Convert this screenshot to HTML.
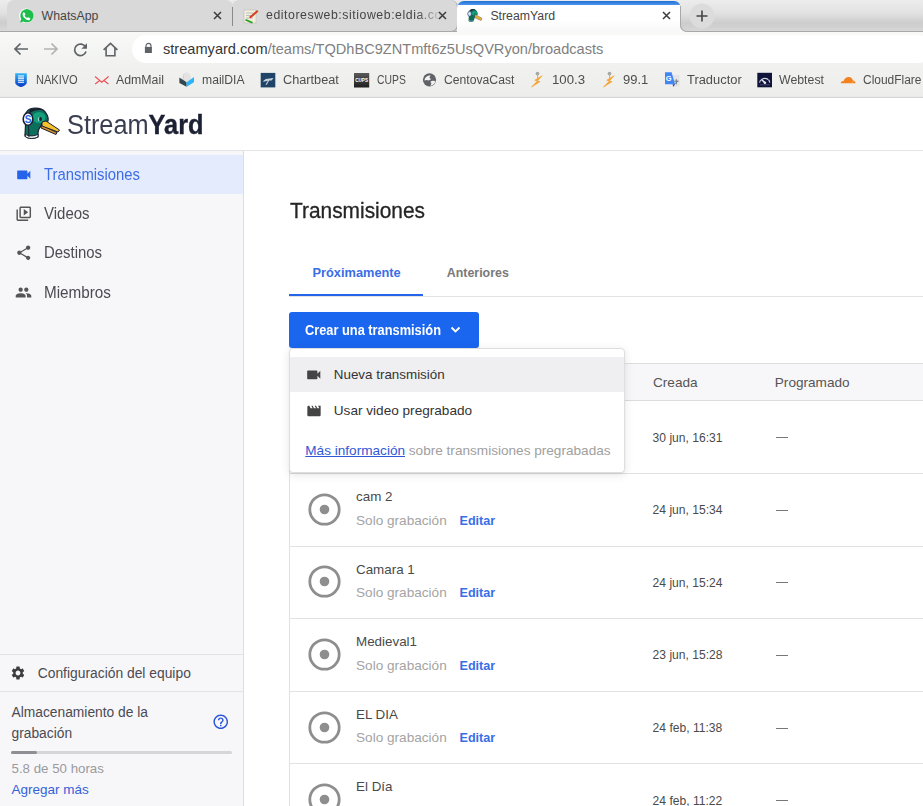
<!DOCTYPE html>
<html><head><meta charset="utf-8">
<style>
*{box-sizing:border-box;margin:0;padding:0}
html,body{width:923px;height:806px;overflow:hidden;background:#fff;font-family:"Liberation Sans",sans-serif}
.a{position:absolute;white-space:nowrap;line-height:1}
svg.a{overflow:visible}
</style></head><body>
<div class="a" style="left:0px;top:0px;width:923px;height:32px;background:#f7f7f7"></div>
<div class="a" style="left:0px;top:0px;width:923px;height:31px;background:linear-gradient(#ececec,#e2e2e2 40%,#cdcdcd 72%,#cfcfcf 80%,#d9d9d9)"></div>
<div class="a" style="left:0px;top:31px;width:923px;height:1px;background:#a8a8a8"></div>
<div class="a" style="left:7px;top:0px;width:226px;height:31px;background:#d9d9d9;border-radius:7px 7px 0 0"></div>
<div class="a" style="left:232px;top:0;width:226px;height:32px;background:#d9d9d9;border-radius:7px 7px 7px 0;border-right:1px solid #a8a8a8;border-bottom:1px solid #a8a8a8"></div>
<div class="a" style="left:232px;top:7px;width:1px;height:19px;background:#8a8a8a"></div>
<div class="a" style="left:457px;top:1px;width:224px;height:31px;background:linear-gradient(#fff,#fff 60%,#f8f8f8);border-radius:7px 7px 0 0;overflow:hidden"><div style="height:3.5px;background:linear-gradient(#1f6fd8,#4f95ea)"></div></div>
<div class="a" style="left:680px;top:0px;width:243px;height:32px;background:#f9f9f9"></div>
<div class="a" style="left:680px;top:0;width:243px;height:32px;background:linear-gradient(#ececec,#e2e2e2 40%,#cdcdcd 72%,#cfcfcf 80%,#d9d9d9);border-bottom-left-radius:7px"></div>
<div class="a" style="left:680px;top:6px;width:12px;height:26px;border-left:1px solid #a8a8a8;border-bottom:1px solid #a8a8a8;border-bottom-left-radius:7px"></div>
<div class="a" style="left:692px;top:31px;width:231px;height:1px;background:#a8a8a8"></div>
<svg class="a" style="left:689px;top:3px;" width="26" height="26" viewBox="0 0 26 26"><circle cx="13" cy="13" r="12.5" fill="#dcdcdc"/><path d="M13 7.5v11M7.5 13h11" stroke="#444" stroke-width="1.6"/></svg>
<svg class="a" style="left:18px;top:8px;" width="16" height="16" viewBox="0 0 16 16"><circle cx="8.3" cy="7.8" r="7.2" fill="#fff"/><path d="M2.2 14.6l1-3.6A6.6 6.6 0 1 1 5.6 13.4z" fill="#1ebe4d"/><path d="M5.3 4.6c.4-.5 1-.4 1.3.2l.7 1.3c.2.4 0 .7-.3 1l-.4.4c.5 1.1 1.4 2 2.5 2.5l.4-.4c.3-.3.7-.4 1-.2l1.3.7c.5.3.6.9.2 1.3-.8 1-2 1.2-3.4.4-1.6-.9-2.8-2.1-3.6-3.7-.6-1.3-.5-2.6.3-3.5z" fill="#fff"/></svg>
<svg class="a" style="left:243px;top:8px;" width="16" height="16" viewBox="0 0 16 16"><rect x="1" y="2" width="12" height="13" fill="#f4f0dc" stroke="#bbb" stroke-width=".6"/><path d="M3 5h8M3 7.5h8M3 10h7" stroke="#9ab" stroke-width=".7"/><path d="M6 9l8-7 1.5 1.5-8 7z" fill="#d9401e"/><path d="M3 11l7 3-1 1.5-7-3z" fill="#2aa02a"/></svg>
<svg class="a" style="left:466px;top:8px;" width="18" height="16" viewBox="0 0 18 16"><path d="M2.5 13L2.8 8.5C1.5 6.5 2 2.5 5 1.5C7.5 .7 10.5 1.3 11.3 4C11.8 5 11.8 6 11.5 7L9.5 8L9 9.5C8.3 10.5 8 11.5 8 13C6 14.2 3.8 14.2 2.5 13Z" fill="#0f6b5a"/><ellipse cx="8.5" cy="5.3" rx="2.6" ry="2.2" fill="#16a07d"/><path d="M4 2C5.5 .8 8.5 .8 10 2.2C8 1.8 6 2.2 4.8 3.3Z" fill="#1b2a40"/><ellipse cx="3.6" cy="5.8" rx="1.9" ry="2.5" fill="#cfe3fb" stroke="#2a3a55" stroke-width=".6"/><circle cx="9" cy="6" r=".6" fill="#1b1f30"/><path d="M9.2 6.4L16 10.3L15 12.5L8.8 9.8Z" fill="#e9b030" stroke="#4a4a6a" stroke-width=".4"/><path d="M3 12.5C4.5 13.5 6.5 13.5 8 12.5" stroke="#9fb3c0" stroke-width=".8" fill="none"/></svg>
<div class="a" style="left:41.6px;top:9.50px;font-size:12.3px;color:#454545">WhatsApp</div>
<div class="a" style="left:266px;top:9.1px;width:180px;overflow:hidden;font-size:12.3px;line-height:1;letter-spacing:0.55px;color:#454545;-webkit-mask-image:linear-gradient(90deg,#000 84%,transparent 98%)">editoresweb:sitioweb:eldia.com</div>
<div class="a" style="left:490.4px;top:9.50px;font-size:12.3px;color:#454545">StreamYard</div>
<svg class="a" style="left:213.0px;top:11px;" width="9" height="9" viewBox="0 0 9 9"><path d="M1 1l7 7M8 1l-7 7" stroke="#3c3c3c" stroke-width="1.5"/></svg>
<svg class="a" style="left:438.0px;top:11px;" width="9" height="9" viewBox="0 0 9 9"><path d="M1 1l7 7M8 1l-7 7" stroke="#3c3c3c" stroke-width="1.5"/></svg>
<svg class="a" style="left:662.0px;top:11px;" width="9" height="9" viewBox="0 0 9 9"><path d="M1 1l7 7M8 1l-7 7" stroke="#3c3c3c" stroke-width="1.5"/></svg>
<div class="a" style="left:0px;top:32px;width:923px;height:65px;background:linear-gradient(#f9f9f8,#f1f1f0 50%,#ededeb)"></div>
<div class="a" style="left:132px;top:35px;width:800px;height:28px;background:#fff;border-radius:14px"></div>
<svg class="a" style="left:13px;top:42px;" width="16" height="14" viewBox="0 0 16 14"><path d="M15 7H2M7.5 1.5L2 7l5.5 5.5" stroke="#5f6368" stroke-width="1.7" fill="none"/></svg>
<svg class="a" style="left:43px;top:42px;" width="16" height="14" viewBox="0 0 16 14"><path d="M1 7h13M8.5 1.5L14 7l-5.5 5.5" stroke="#b3b3b3" stroke-width="1.7" fill="none"/></svg>
<svg class="a" style="left:73px;top:41.5px;" width="15" height="15" viewBox="0 0 15 15"><path d="M12.6 5.2A5.8 5.8 0 1 0 13 9.5" stroke="#5f6368" stroke-width="1.7" fill="none"/><path d="M14 1.2v5.6H8.4z" fill="#5f6368"/></svg>
<svg class="a" style="left:102px;top:41px;" width="17" height="16" viewBox="0 0 17 16"><path d="M1.6 8.9L8.5 2.3l6.9 6.6M4.1 7.1v7.6h8.8V7.1" stroke="#5f6368" stroke-width="1.6" fill="none"/></svg>
<svg class="a" style="left:144px;top:42px;" width="9" height="12" viewBox="0 0 9 12"><path d="M2 5.5V3.9A2.5 2.5 0 0 1 7 3.9V5.5" stroke="#5f6368" stroke-width="1.1" fill="none"/><rect x=".9" y="4.9" width="7" height="6.1" fill="#5f6368"/></svg>
<div class="a" style="left:163.0px;top:41.50px;font-size:14.6px;color:#808080"><span style="color:#363636">streamyard.com</span>/teams/TQDhBC9ZNTmft6z5UsQVRyon/broadcasts</div>
<div class="a" style="left:0px;top:96px;width:923px;height:1px;background:#e9e9e8"></div>
<div class="a" style="left:0px;top:97px;width:923px;height:1px;background:#d6d6d6"></div>
<div class="a" style="left:36.2px;top:74.00px;font-size:12.5px;transform-origin:0 0;transform:scaleX(0.883);color:#4e4e4e">NAKIVO</div>
<div class="a" style="left:116.3px;top:74.00px;font-size:12.5px;transform-origin:0 0;transform:scaleX(0.985);color:#4e4e4e">AdmMail</div>
<div class="a" style="left:202.3px;top:74.00px;font-size:12.5px;transform-origin:0 0;transform:scaleX(0.973);color:#4e4e4e">mailDIA</div>
<div class="a" style="left:282.5px;top:74.00px;font-size:12.5px;transform-origin:0 0;transform:scaleX(1.018);color:#4e4e4e">Chartbeat</div>
<div class="a" style="left:376.8px;top:74.00px;font-size:12.5px;transform-origin:0 0;transform:scaleX(0.829);color:#4e4e4e">CUPS</div>
<div class="a" style="left:443.8px;top:74.00px;font-size:12.5px;transform-origin:0 0;transform:scaleX(0.974);color:#4e4e4e">CentovaCast</div>
<div class="a" style="left:552.2px;top:74.00px;font-size:12.5px;transform-origin:0 0;transform:scaleX(1.058);color:#4e4e4e">100.3</div>
<div class="a" style="left:623.4px;top:74.00px;font-size:12.5px;transform-origin:0 0;transform:scaleX(1.039);color:#4e4e4e">99.1</div>
<div class="a" style="left:686.7px;top:74.00px;font-size:12.5px;transform-origin:0 0;transform:scaleX(1.031);color:#4e4e4e">Traductor</div>
<div class="a" style="left:779.2px;top:74.00px;font-size:12.5px;transform-origin:0 0;transform:scaleX(0.986);color:#4e4e4e">Webtest</div>
<div class="a" style="left:862.9px;top:74.00px;font-size:12.5px;transform-origin:0 0;transform:scaleX(0.957);color:#4e4e4e">CloudFlare</div>
<svg class="a" style="left:12.5px;top:71.5px;" width="16" height="16" viewBox="0 0 16 16"><defs><linearGradient id="nk" x1="0" y1="0" x2="0" y2="1"><stop offset="0" stop-color="#35b6f4"/><stop offset="1" stop-color="#0638c4"/></linearGradient></defs><path d="M2.2 1.3h11.6v9.2C13.8 12.5 11 14.2 8 15C5 14.2 2.2 12.5 2.2 10.5z" fill="url(#nk)"/><path d="M5 4h6M5 6.1h6M5 8.2h6M5 10.3h6" stroke="#fff" stroke-width="1.05"/></svg>
<svg class="a" style="left:93.5px;top:71.5px;" width="16" height="16" viewBox="0 0 16 16"><path d="M1 4.5L7.8 10.2L14.6 4.5M1.2 12L6 8.2M14.4 12L9.6 8.2" stroke="#ee4d55" stroke-width="1.1" fill="none"/></svg>
<svg class="a" style="left:179px;top:71px;" width="16" height="16" viewBox="0 0 16 16"><ellipse cx="7.6" cy="6.6" rx="4.4" ry="5.4" fill="#e3e3e3"/><path d="M5 3C4 5 4 9 6 11" stroke="#d0d0d0" stroke-width=".8" fill="none"/><path d="M.4 6.4L7.6 11.2V15.8L.4 11.9z" fill="#36464f"/><path d="M7.6 11.2L15 6V11.2L7.6 15.8z" fill="#2bb6fb"/></svg>
<svg class="a" style="left:259.5px;top:71.5px;" width="16" height="16" viewBox="0 0 16 16"><rect x=".7" y=".9" width="14.6" height="14.5" fill="#1f4468"/><path d="M2.6 9.6L5.8 6.9L13.6 6.1L11.6 8.4L9.2 8.6L6.6 13L5.6 12.6L7.9 8.7L4.6 9.6Z" fill="#c9d3de"/></svg>
<svg class="a" style="left:354px;top:71.5px;" width="16" height="16" viewBox="0 0 16 16"><defs><linearGradient id="cu" x1="0" y1="0" x2="0" y2="1"><stop offset="0" stop-color="#5a5a5a"/><stop offset="1" stop-color="#1e1e1e"/></linearGradient></defs><rect x="0" y="1" width="15.2" height="14.5" fill="url(#cu)"/><text x="7.6" y="10" font-size="4.6" fill="#fff" text-anchor="middle" font-family="Liberation Sans" font-weight="bold">CUPS</text></svg>
<svg class="a" style="left:421.5px;top:71.5px;" width="16" height="16" viewBox="0 0 16 16"><circle cx="7.5" cy="7.8" r="6.6" fill="#5f6368"/><path d="M2.6 8.6C2.4 6 4.5 3.3 8.6 3.4L7.4 5.6L9 7.3L6.6 8.6L4.8 8Z" fill="#f2f2f2"/><path d="M8.4 9.4L10.6 8.7L13.4 9C13 11.5 11 13.6 8.4 13.9L9.4 11.6Z" fill="#f2f2f2"/></svg>
<svg class="a" style="left:529px;top:71px;" width="16" height="16" viewBox="0 0 16 16"><circle cx="8.5" cy="2.6" r="1.9" fill="#a8a8a8"/><path d="M8.5 3.5L8.8 8" stroke="#f6a637" stroke-width="1.1"/><path d="M13.2 4.8L5.8 9.2L8.6 9.8L2.6 16L11 10.6L8.2 9.9z" fill="#f7a02a" stroke="#f7a02a" stroke-width=".7" stroke-linejoin="round"/></svg>
<svg class="a" style="left:600.5px;top:71px;" width="16" height="16" viewBox="0 0 16 16"><circle cx="8.5" cy="2.6" r="1.9" fill="#a8a8a8"/><path d="M8.5 3.5L8.8 8" stroke="#f6a637" stroke-width="1.1"/><path d="M13.2 4.8L5.8 9.2L8.6 9.8L2.6 16L11 10.6L8.2 9.9z" fill="#f7a02a" stroke="#f7a02a" stroke-width=".7" stroke-linejoin="round"/></svg>
<svg class="a" style="left:664px;top:71px;" width="16" height="16" viewBox="0 0 16 16"><rect x="8.5" y="4" width="7" height="11.6" fill="#e4e4e4"/><path d="M12.3 8.2v5.2M10.2 10.2h4.4M10.6 13l3.4-3" stroke="#6d7f86" stroke-width="1"/><path d="M1 1.2H7.6L11 13.2H1Z" fill="#4285f4"/><path d="M8.6 13.2H11L9.4 16Z" fill="#3440b8"/><text x="4.7" y="10.3" font-size="7.5" fill="#fff" text-anchor="middle" font-family="Liberation Sans" font-weight="bold">G</text></svg>
<svg class="a" style="left:756.5px;top:71.5px;" width="16" height="16" viewBox="0 0 16 16"><rect x=".3" y=".8" width="14.7" height="14.5" fill="#10143a"/><path d="M2.6 10.6A5.2 5.2 0 0 1 12.8 10.6" stroke="#cfd6e6" stroke-width="1.1" fill="none"/><path d="M3.2 7.4l1 .6M5 4.9l.6 1M7.7 4.2v1.1M10.4 4.9l-.6 1M12.2 7.4l-1 .6" stroke="#10143a" stroke-width=".7"/><path d="M7.7 10.5L4.6 7.6" stroke="#e8ecf2" stroke-width="1.5"/><circle cx="7.9" cy="10.7" r="1.3" fill="#e8ecf2"/><path d="M3 12.8h9.5" stroke="#6a7090" stroke-width=".6"/></svg>
<svg class="a" style="left:839.5px;top:71.5px;" width="16" height="16" viewBox="0 0 16 16"><path d="M.8 11.2C1 9.6 2.2 8.7 3.7 9C4.4 6.5 6.5 5 8.6 5C11 5 12.6 6.6 13 8.6C14.4 8.6 15.5 9.8 15.5 11.2z" fill="#f48120"/><path d="M11.5 11.2C12 9.8 13 9.2 14.2 9.4" stroke="#fbad41" stroke-width="1" fill="none"/></svg>
<div class="a" style="left:0px;top:98px;width:923px;height:52px;background:#fff"></div>
<div class="a" style="left:0px;top:150px;width:923px;height:1px;background:#e4e4e7"></div>
<div class="a" style="left:0px;top:151px;width:243px;height:655px;background:#f7f7f9"></div>
<div class="a" style="left:243px;top:151px;width:1px;height:655px;background:#dddde1"></div>
<div class="a" style="left:0px;top:155px;width:243px;height:39px;background:#e3ebfd"></div>
<svg class="a" style="left:18px;top:104px;" width="46" height="40" viewBox="0 0 46 40"><path d="M7 31L7.5 21C5 17 6 8 12 5C17 3 25 4 28 9C30 12 30.5 15 30 17L24 19L23 22C21 24 20 26 20 30L20 33C16 35 10 35 7 32Z" fill="#0e6e5c" stroke="#1b1f30" stroke-width="1.2"/><ellipse cx="21" cy="13.5" rx="6.5" ry="5.5" fill="#14a07c"/><path d="M11 6.5C14 3.5 22 3.5 25.5 6.5C21 5.5 15 6.5 12 9Z" fill="#1b1f30"/><path d="M7.3 30C10 32.5 17 32.5 20 30L20 33C16 35 10 35 7.3 32.5Z" fill="#f2f6f5" stroke="#1b1f30" stroke-width="1"/><path d="M10.5 21L11 33" stroke="#1b1f30" stroke-width="1"/><ellipse cx="10" cy="15" rx="4.8" ry="6.2" fill="#fff" stroke="#1b1f30" stroke-width="1.6"/><text x="10" y="19" font-size="10" font-weight="bold" fill="#2f6ae8" text-anchor="middle" font-family="Liberation Sans">S</text><ellipse cx="22.6" cy="15" rx="1.3" ry="1.9" fill="#1b1f30"/><path d="M20.8 13.5C20.3 14.5 20.3 16 20.8 17" stroke="#e8f0ee" stroke-width=".8" fill="none"/><path d="M23.5 21L39 28.5L38 30.5L23 24Z" fill="#d8902c" stroke="#1b1f30" stroke-width="1"/><path d="M24 18L28 17L41.5 26L40 28L24 22Z" fill="#f6c22e" stroke="#1b1f30" stroke-width="1"/></svg>
<div class="a" style="left:67.0px;top:109.80px;font-size:28.2px;transform-origin:0 0;transform:scaleX(0.898);color:#1c2033"><span style="color:#3a3e50">Stream</span><span style="font-weight:bold;-webkit-text-stroke:0.4px #1c2033">Yard</span></div>
<svg class="a" style="left:14.8px;top:165.5px;" width="17.5" height="17.5" viewBox="0 0 24 24"><path fill="#2563eb" d="M17 10.5V7c0-.55-.45-1-1-1H4c-.55 0-1 .45-1 1v10c0 .55.45 1 1 1h12c.55 0 1-.45 1-1v-3.5l4 4v-11l-4 4z"/></svg>
<svg class="a" style="left:14.6px;top:205.3px;" width="17.5" height="17.5" viewBox="0 0 24 24"><path fill="#555" d="M4 6H2v14c0 1.1.9 2 2 2h14v-2H4V6zm16-4H8c-1.1 0-2 .9-2 2v12c0 1.1.9 2 2 2h12c1.1 0 2-.9 2-2V4c0-1.1-.9-2-2-2zm0 14H8V4h12v12zM12 5.5v9l6-4.5z"/></svg>
<svg class="a" style="left:14.6px;top:244.4px;" width="17.5" height="17.5" viewBox="0 0 24 24"><path fill="#555" d="M18 16.08c-.76 0-1.44.3-1.96.77L8.91 12.7c.05-.23.09-.46.09-.7s-.04-.47-.09-.7l7.05-4.11c.54.5 1.25.81 2.04.81 1.66 0 3-1.34 3-3s-1.34-3-3-3-3 1.34-3 3c0 .24.04.47.09.7L8.04 9.81C7.5 9.31 6.79 9 6 9c-1.66 0-3 1.34-3 3s1.34 3 3 3c.79 0 1.5-.31 2.04-.81l7.12 4.16c-.05.21-.08.43-.08.65 0 1.61 1.31 2.92 2.92 2.92 1.61 0 2.92-1.31 2.92-2.92s-1.31-2.92-2.92-2.92z"/></svg>
<svg class="a" style="left:15.2px;top:283.8px;" width="17" height="17" viewBox="0 0 24 24"><path fill="#555" d="M16 11c1.66 0 2.99-1.34 2.99-3S17.66 5 16 5c-1.66 0-3 1.34-3 3s1.34 3 3 3zm-8 0c1.66 0 2.99-1.34 2.99-3S9.66 5 8 5C6.34 5 5 6.34 5 8s1.34 3 3 3zm0 2c-2.33 0-7 1.17-7 3.5V19h14v-2.5c0-2.33-4.67-3.5-7-3.5zm8 0c-.29 0-.62.02-.97.05 1.16.84 1.97 1.97 1.97 3.45V19h6v-2.5c0-2.33-4.67-3.5-7-3.5z"/></svg>
<div class="a" style="left:43.5px;top:167.30px;font-size:16.86px;transform-origin:0 0;transform:scaleX(0.881);color:#3d6de6">Transmisiones</div>
<div class="a" style="left:43.5px;top:206.40px;font-size:16.86px;transform-origin:0 0;transform:scaleX(0.890);color:#4b4b52">Videos</div>
<div class="a" style="left:43.5px;top:245.10px;font-size:16.86px;transform-origin:0 0;transform:scaleX(0.884);color:#4b4b52">Destinos</div>
<div class="a" style="left:43.5px;top:284.70px;font-size:16.86px;transform-origin:0 0;transform:scaleX(0.905);color:#4b4b52">Miembros</div>
<div class="a" style="left:0px;top:654px;width:243px;height:1px;background:#e3e3e6"></div>
<div class="a" style="left:0px;top:691px;width:243px;height:1px;background:#e3e3e6"></div>
<svg class="a" style="left:9.6px;top:665px;" width="16" height="16" viewBox="0 0 24 24"><path fill="#3d3d3d" d="M19.14 12.94c.04-.3.06-.61.06-.94 0-.32-.02-.64-.07-.94l2.03-1.58c.18-.14.23-.41.12-.61l-1.92-3.32c-.12-.22-.37-.29-.59-.22l-2.39.96c-.5-.38-1.03-.7-1.62-.94l-.36-2.54c-.04-.24-.24-.41-.48-.41h-3.84c-.24 0-.43.17-.47.41l-.36 2.54c-.59.24-1.13.57-1.62.94l-2.39-.96c-.22-.08-.47 0-.59.22L2.74 8.87c-.12.21-.08.47.12.61l2.03 1.58c-.05.3-.09.63-.09.94s.02.64.07.94l-2.03 1.58c-.18.14-.23.41-.12.61l1.92 3.32c.12.22.37.29.59.22l2.39-.96c.5.38 1.03.7 1.62.94l.36 2.54c.05.24.24.41.48.41h3.84c.24 0 .44-.17.47-.41l.36-2.54c.59-.24 1.13-.56 1.62-.94l2.39.96c.22.08.47 0 .59-.22l1.92-3.32c.12-.22.07-.47-.12-.61l-2.01-1.58zM12 15.6c-1.98 0-3.6-1.62-3.6-3.6s1.62-3.6 3.6-3.6 3.6 1.62 3.6 3.6-1.62 3.6-3.6 3.6z"/></svg>
<div class="a" style="left:37.7px;top:666.50px;font-size:13.85px;color:#4b4b52">Configuración del equipo</div>
<div class="a" style="left:11.5px;top:705.50px;font-size:13.8px;color:#4b4b52">Almacenamiento de la</div>
<div class="a" style="left:11.5px;top:726.50px;font-size:13.8px;color:#4b4b52">grabación</div>
<svg class="a" style="left:211.8px;top:713.2px;" width="17.5" height="17.5" viewBox="0 0 24 24"><path fill="#2a55d9" d="M11 18h2v-2h-2v2zm1-16C6.48 2 2 6.48 2 12s4.48 10 10 10 10-4.48 10-10S17.52 2 12 2zm0 18c-4.41 0-8-3.59-8-8s3.59-8 8-8 8 3.59 8 8-3.59 8-8 8zm0-14c-2.21 0-4 1.79-4 4h2c0-1.1.9-2 2-2s2 .9 2 2c0 2-3 1.75-3 5h2c0-2.25 3-2.5 3-5 0-2.21-1.79-4-4-4z"/></svg>
<div class="a" style="left:11px;top:751px;width:221px;height:3px;background:#d6d6d9;border-radius:2px"></div>
<div class="a" style="left:11px;top:751px;width:26px;height:3px;background:#8f8f93;border-radius:2px"></div>
<div class="a" style="left:11.5px;top:761.60px;font-size:13.3px;color:#9a9a9e">5.8 de 50 horas</div>
<div class="a" style="left:11.5px;top:783.00px;font-size:13.5px;color:#3461d8">Agregar más</div>
<div class="a" style="left:290.4px;top:200.70px;font-size:21.37px;transform-origin:0 0;transform:scaleX(0.978);color:#252525;-webkit-text-stroke:0.3px #252525">Transmisiones</div>
<div class="a" style="left:312.5px;top:267.00px;font-size:12.8px;color:#3a6de6;font-weight:bold">Próximamente</div>
<div class="a" style="left:446.8px;top:267.00px;font-size:12.4px;color:#797979;font-weight:bold">Anteriores</div>
<div class="a" style="left:289px;top:296px;width:634px;height:1px;background:#e3e3e3"></div>
<div class="a" style="left:289px;top:294px;width:134px;height:2px;background:#2563eb"></div>
<div class="a" style="left:289px;top:312px;width:190px;height:36px;background:#1a66ee;border-radius:3px"></div>
<div class="a" style="left:304.8px;top:323.30px;font-size:14.39px;transform-origin:0 0;transform:scaleX(0.891);color:#fff;font-weight:bold">Crear una transmisión</div>
<svg class="a" style="left:450px;top:326px;" width="11" height="8" viewBox="0 0 11 8"><path d="M1.5 1.5l4 4 4-4" stroke="#fff" stroke-width="1.8" fill="none"/></svg>
<div class="a" style="left:289px;top:363px;width:634px;height:1px;background:#dedede"></div>
<div class="a" style="left:289px;top:364px;width:634px;height:36px;background:#f7f7f9"></div>
<div class="a" style="left:289px;top:400px;width:634px;height:1px;background:#dcdcdc"></div>
<div class="a" style="left:289px;top:363px;width:1px;height:443px;background:#e0e0e0"></div>
<div class="a" style="left:653.0px;top:375.70px;font-size:13.6px;color:#555">Creada</div>
<div class="a" style="left:774.8px;top:375.80px;font-size:13.6px;color:#555">Programado</div>
<svg class="a" style="left:308.3px;top:420.1px;" width="33" height="33" viewBox="0 0 33 33"><circle cx="16.5" cy="16.5" r="14.7" stroke="#8e8e8e" stroke-width="2.8" fill="none"/><circle cx="16.5" cy="16.5" r="4.8" fill="#8e8e8e"/></svg>
<div class="a" style="left:652.6px;top:431.50px;font-size:12.1px;color:#4a4a4a">30 jun, 16:31</div>
<div class="a" style="left:775.5px;top:437px;width:12px;height:1px;background:#777"></div>
<div class="a" style="left:289px;top:473px;width:634px;height:1px;background:#e2e2e2"></div>
<svg class="a" style="left:308.3px;top:492.7px;" width="33" height="33" viewBox="0 0 33 33"><circle cx="16.5" cy="16.5" r="14.7" stroke="#8e8e8e" stroke-width="2.8" fill="none"/><circle cx="16.5" cy="16.5" r="4.8" fill="#8e8e8e"/></svg>
<div class="a" style="left:356.0px;top:489.90px;font-size:13.4px;color:#4a4a4a">cam 2</div>
<div class="a" style="left:356.0px;top:513.60px;font-size:13.6px;color:#a4a4a4">Solo grabación</div>
<div class="a" style="left:459.5px;top:514.60px;font-size:12.6px;color:#386ee6;font-weight:bold">Editar</div>
<div class="a" style="left:652.6px;top:504.10px;font-size:12.1px;color:#4a4a4a">24 jun, 15:34</div>
<div class="a" style="left:775.5px;top:510px;width:12px;height:1px;background:#777"></div>
<div class="a" style="left:289px;top:546px;width:634px;height:1px;background:#e2e2e2"></div>
<svg class="a" style="left:308.3px;top:565.3px;" width="33" height="33" viewBox="0 0 33 33"><circle cx="16.5" cy="16.5" r="14.7" stroke="#8e8e8e" stroke-width="2.8" fill="none"/><circle cx="16.5" cy="16.5" r="4.8" fill="#8e8e8e"/></svg>
<div class="a" style="left:356.0px;top:562.50px;font-size:13.4px;color:#4a4a4a">Camara 1</div>
<div class="a" style="left:356.0px;top:586.20px;font-size:13.6px;color:#a4a4a4">Solo grabación</div>
<div class="a" style="left:459.5px;top:587.20px;font-size:12.6px;color:#386ee6;font-weight:bold">Editar</div>
<div class="a" style="left:652.6px;top:576.70px;font-size:12.1px;color:#4a4a4a">24 jun, 15:24</div>
<div class="a" style="left:775.5px;top:582px;width:12px;height:1px;background:#777"></div>
<div class="a" style="left:289px;top:618px;width:634px;height:1px;background:#e2e2e2"></div>
<svg class="a" style="left:308.3px;top:637.9px;" width="33" height="33" viewBox="0 0 33 33"><circle cx="16.5" cy="16.5" r="14.7" stroke="#8e8e8e" stroke-width="2.8" fill="none"/><circle cx="16.5" cy="16.5" r="4.8" fill="#8e8e8e"/></svg>
<div class="a" style="left:356.0px;top:635.10px;font-size:13.4px;color:#4a4a4a">Medieval1</div>
<div class="a" style="left:356.0px;top:658.80px;font-size:13.6px;color:#a4a4a4">Solo grabación</div>
<div class="a" style="left:459.5px;top:659.80px;font-size:12.6px;color:#386ee6;font-weight:bold">Editar</div>
<div class="a" style="left:652.6px;top:649.30px;font-size:12.1px;color:#4a4a4a">23 jun, 15:28</div>
<div class="a" style="left:775.5px;top:655px;width:12px;height:1px;background:#777"></div>
<div class="a" style="left:289px;top:691px;width:634px;height:1px;background:#e2e2e2"></div>
<svg class="a" style="left:308.3px;top:710.5px;" width="33" height="33" viewBox="0 0 33 33"><circle cx="16.5" cy="16.5" r="14.7" stroke="#8e8e8e" stroke-width="2.8" fill="none"/><circle cx="16.5" cy="16.5" r="4.8" fill="#8e8e8e"/></svg>
<div class="a" style="left:356.0px;top:707.70px;font-size:13.4px;color:#4a4a4a">EL DIA</div>
<div class="a" style="left:356.0px;top:731.40px;font-size:13.6px;color:#a4a4a4">Solo grabación</div>
<div class="a" style="left:459.5px;top:732.40px;font-size:12.6px;color:#386ee6;font-weight:bold">Editar</div>
<div class="a" style="left:652.6px;top:721.90px;font-size:12.1px;color:#4a4a4a">24 feb, 11:38</div>
<div class="a" style="left:775.5px;top:728px;width:12px;height:1px;background:#777"></div>
<div class="a" style="left:289px;top:763px;width:634px;height:1px;background:#e2e2e2"></div>
<svg class="a" style="left:308.3px;top:783.1px;" width="33" height="33" viewBox="0 0 33 33"><circle cx="16.5" cy="16.5" r="14.7" stroke="#8e8e8e" stroke-width="2.8" fill="none"/><circle cx="16.5" cy="16.5" r="4.8" fill="#8e8e8e"/></svg>
<div class="a" style="left:356.0px;top:780.30px;font-size:13.4px;color:#4a4a4a">El Día</div>
<div class="a" style="left:356.0px;top:804.00px;font-size:13.6px;color:#a4a4a4">Solo grabación</div>
<div class="a" style="left:459.5px;top:805.00px;font-size:12.6px;color:#386ee6;font-weight:bold">Editar</div>
<div class="a" style="left:652.6px;top:794.50px;font-size:12.1px;color:#4a4a4a">24 feb, 11:22</div>
<div class="a" style="left:775.5px;top:800px;width:12px;height:1px;background:#777"></div>
<div class="a" style="left:289px;top:348px;width:336px;height:125px;background:#fff;border:1px solid #dedee0;border-radius:4px;box-shadow:0 2px 10px rgba(0,0,0,.10),0 1px 2px rgba(0,0,0,.05)"></div>
<div class="a" style="left:290px;top:357px;width:334px;height:35px;background:#efeff1"></div>
<svg class="a" style="left:304.8px;top:366px;" width="17.5" height="17.5" viewBox="0 0 24 24"><path fill="#444" d="M17 10.5V7c0-.55-.45-1-1-1H4c-.55 0-1 .45-1 1v10c0 .55.45 1 1 1h12c.55 0 1-.45 1-1v-3.5l4 4v-11l-4 4z"/></svg>
<svg class="a" style="left:305.6px;top:403px;" width="16" height="16" viewBox="0 0 24 24"><path fill="#444" d="M18 4l2 4h-3l-2-4h-2l2 4h-3l-2-4H8l2 4H7L5 4H4c-1.1 0-1.99.9-1.99 2L2 18c0 1.1.9 2 2 2h16c1.1 0 2-.9 2-2V4h-4z"/></svg>
<div class="a" style="left:333.8px;top:368.00px;font-size:13.4px;color:#333">Nueva transmisión</div>
<div class="a" style="left:333.8px;top:404.00px;font-size:13.6px;color:#333">Usar video pregrabado</div>
<div class="a" style="left:305.3px;top:443.80px;font-size:13.6px;color:#a0a0a0"><span style="color:#3158d6;text-decoration:underline">Más información</span> sobre transmisiones pregrabadas</div>
</body></html>
